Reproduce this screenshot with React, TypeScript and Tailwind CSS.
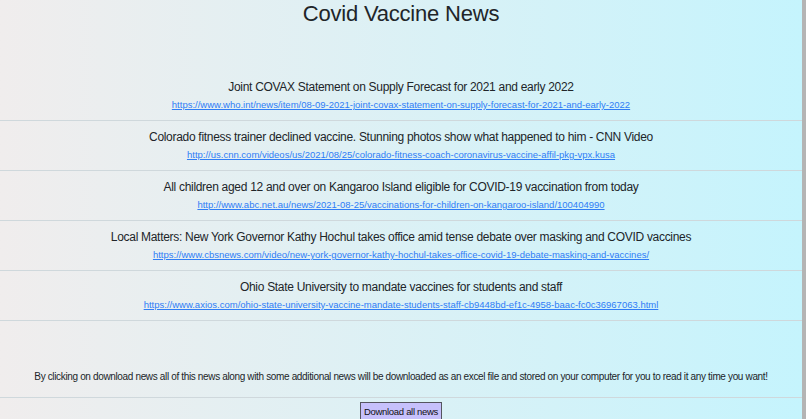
const news = [
  {
    title: 'Joint COVAX Statement on Supply Forecast for 2021 and early 2022',
    url: 'https://www.who.int/news/item/08-09-2021-joint-covax-statement-on-supply-forecast-for-2021-and-early-2022',
  },
  {
    title: 'Colorado fitness trainer declined vaccine. Stunning photos show what happened to him - CNN Video',
    url: 'http://us.cnn.com/videos/us/2021/08/25/colorado-fitness-coach-coronavirus-vaccine-affil-pkg-vpx.kusa',
  },
  {
    title: 'All children aged 12 and over on Kangaroo Island eligible for COVID-19 vaccination from today',
    url: 'http://www.abc.net.au/news/2021-08-25/vaccinations-for-children-on-kangaroo-island/100404990',
  },
  {
    title: 'Local Matters: New York Governor Kathy Hochul takes office amid tense debate over masking and COVID vaccines',
    url: 'https://www.cbsnews.com/video/new-york-governor-kathy-hochul-takes-office-covid-19-debate-masking-and-vaccines/',
  },
  {
    title: 'Ohio State University to mandate vaccines for students and staff',
    url: 'https://www.axios.com/ohio-state-university-vaccine-mandate-students-staff-cb9448bd-ef1c-4958-baac-fc0c36967063.html',
  },
]

export default function App() {
  return (
    <div className="h-[419px] overflow-hidden flex">
      <div className="flex-1 flex flex-col bg-gradient-to-r from-[#f0eded] to-[#c5f4fd] text-[#212529] font-['Liberation_Sans',Arial,sans-serif]">
        <h1 className="h-[28px] leading-[28px] text-center text-[22px] font-medium tracking-[-0.2px]">Covid Vaccine News</h1>

        <div className="mt-[43px] flex flex-col">
          {news.map((n) => (
            <div key={n.url} className="flex flex-col items-center text-center border-b border-[#cfd8dc] pt-[7px] pb-[8px]">
              <div className="h-[18px] leading-[18px] text-[12px] tracking-[-0.3px]">{n.title}</div>
              <a href={n.url} className="mt-[2px] h-[14px] leading-[14px] text-[9.5px] text-[#2f7df6] underline">
                {n.url}
              </a>
            </div>
          ))}
        </div>

        <p className="mt-[49px] h-[14px] leading-[14px] text-center text-[10px] tracking-[-0.35px] whitespace-nowrap">
          By clicking on download news all of this news along with some additional news will be downloaded as an excel file and stored on your computer for you to read it any time you want!
        </p>
        <div className="mt-[13px] border-b border-[#cfd8dc]" />
        <div className="mt-[4px] flex justify-center">
          <button className="h-[19px] px-[3px] text-[9.5px] leading-[17px] tracking-[-0.3px] bg-[#c6c0fb] border border-[#55555f] text-[#111]">
            Download all news
          </button>
        </div>
      </div>
      <div className="w-[4px] bg-[#b4b4b4]" />
    </div>
  )
}
